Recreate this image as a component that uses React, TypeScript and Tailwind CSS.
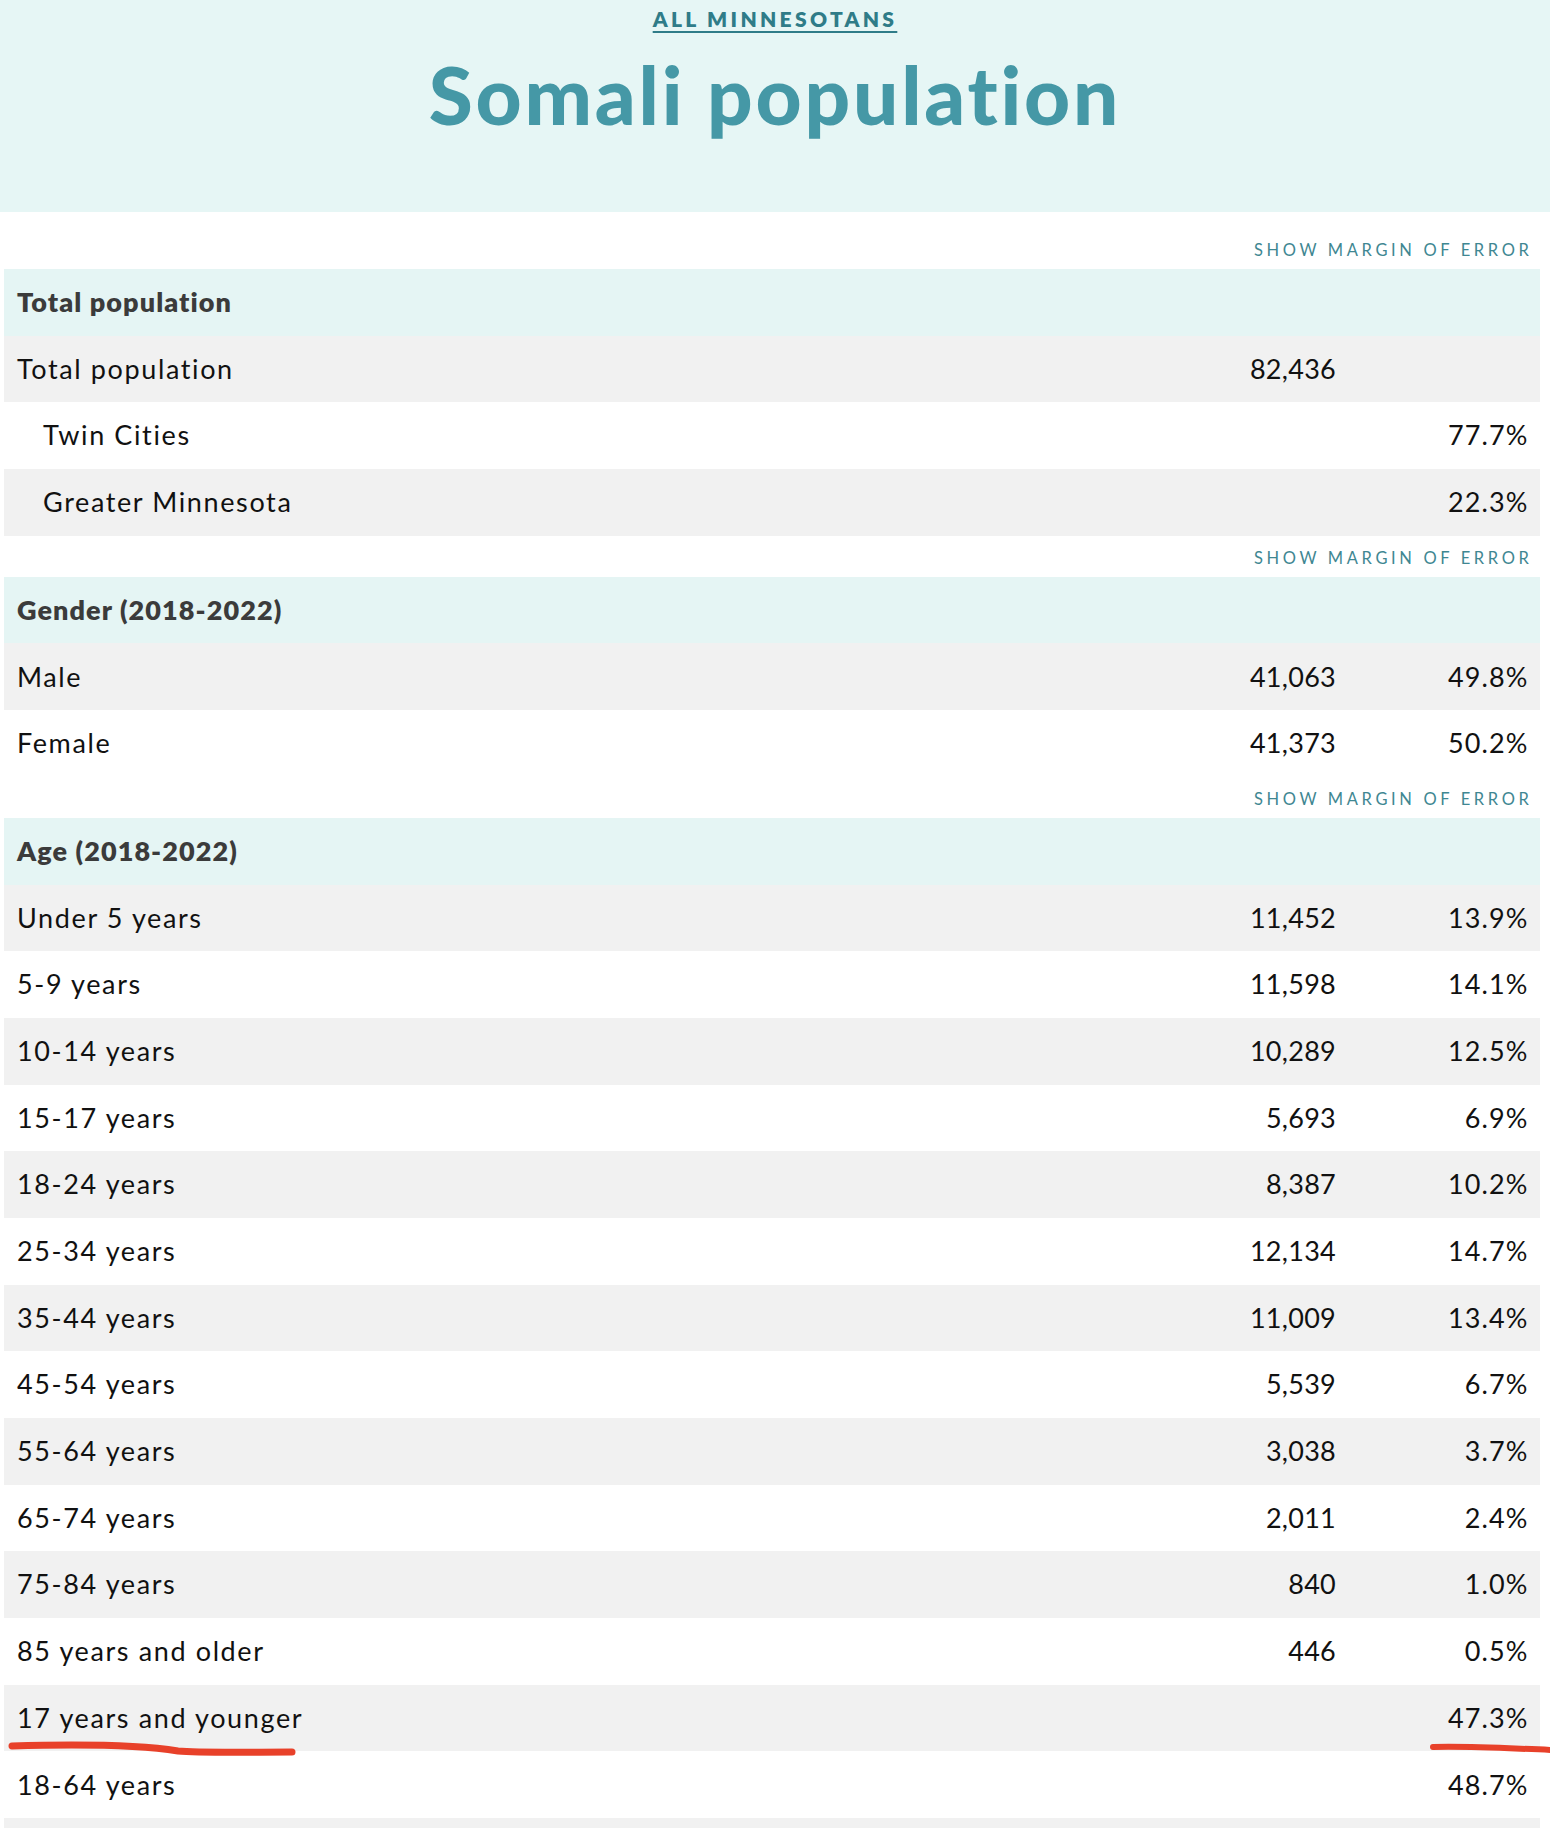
import React from "react";

type Row = { label: string; count?: string; pct?: string; indent?: boolean };
type Section = { title: string; rows: Row[]; first?: boolean };

const sections: Section[] = [
  {
    title: "Total population",
    first: true,
    rows: [
      { label: "Total population", count: "82,436" },
      { label: "Twin Cities", pct: "77.7%", indent: true },
      { label: "Greater Minnesota", pct: "22.3%", indent: true },
    ],
  },
  {
    title: "Gender (2018-2022)",
    rows: [
      { label: "Male", count: "41,063", pct: "49.8%" },
      { label: "Female", count: "41,373", pct: "50.2%" },
    ],
  },
  {
    title: "Age (2018-2022)",
    rows: [
      { label: "Under 5 years", count: "11,452", pct: "13.9%" },
      { label: "5-9 years", count: "11,598", pct: "14.1%" },
      { label: "10-14 years", count: "10,289", pct: "12.5%" },
      { label: "15-17 years", count: "5,693", pct: "6.9%" },
      { label: "18-24 years", count: "8,387", pct: "10.2%" },
      { label: "25-34 years", count: "12,134", pct: "14.7%" },
      { label: "35-44 years", count: "11,009", pct: "13.4%" },
      { label: "45-54 years", count: "5,539", pct: "6.7%" },
      { label: "55-64 years", count: "3,038", pct: "3.7%" },
      { label: "65-74 years", count: "2,011", pct: "2.4%" },
      { label: "75-84 years", count: "840", pct: "1.0%" },
      { label: "85 years and older", count: "446", pct: "0.5%" },
      { label: "17 years and younger", pct: "47.3%" },
      { label: "18-64 years", pct: "48.7%" },
      // next row only peeks in at the bottom edge
      { label: "" },
    ],
  },
];

function MarginToggle({ first }: { first?: boolean }) {
  return (
    <div
      className={
        "flex h-[41px] items-center justify-end pr-[7px] pt-[4px] text-[16.5px] uppercase tracking-[0.22em] text-[#3f8792] " +
        (first ? "mt-[16px]" : "")
      }
    >
      Show margin of error
    </div>
  );
}

function DataTable({ section }: { section: Section }) {
  return (
    <div>
      <MarginToggle first={section.first} />
      <div className="flex h-[66.7px] items-center bg-[#e5f5f4] pl-[13px] text-[27px] font-extrabold tracking-[0.04em] text-[#3b3b3b]">
        {section.title}
      </div>
      {section.rows.map((row, i) => (
        <div
          key={row.label + i}
          className={
            "flex h-[66.7px] items-center pr-[11px] text-[27px] text-[#111] " +
            (i % 2 === 0 ? "bg-[#f1f1f1] " : "bg-white ") +
            (row.indent ? "pl-[39px]" : "pl-[13px]")
          }
        >
          <span className="flex-1 tracking-[0.06em]">{row.label}</span>
          <span className="w-[200px] text-right tracking-[0.01em]">{row.count}</span>
          <span className="w-[192.5px] text-right tracking-[0.04em]">{row.pct}</span>
        </div>
      ))}
    </div>
  );
}

export default function App() {
  return (
    <div className="relative h-[1828px] w-[1550px] overflow-hidden bg-white font-['Lato','Open_Sans',sans-serif]">
      <header className="flex h-[212px] flex-col items-center bg-[#e6f6f5]">
        <a
          href="#"
          className="mt-[8px] text-[21px] font-extrabold uppercase leading-none tracking-[3.3px] text-[#2f7c88] underline decoration-[2px] underline-offset-[4px]"
        >
          All Minnesotans
        </a>
        <h1 className="mt-[25px] text-[80px] font-black leading-none tracking-[0.035em] text-[#4598a6]">
          Somali population
        </h1>
      </header>

      <div className="pl-[4px] pr-[10.5px]">
        {sections.map((s) => (
          <DataTable key={s.title} section={s} />
        ))}
      </div>

      <svg
        className="pointer-events-none absolute left-0 top-0"
        width="1550"
        height="1828"
        viewBox="0 0 1550 1828"
      >
        <path
          d="M12 1746 C 80 1744, 140 1745, 178 1751 C 200 1753, 250 1752, 292 1752"
          fill="none"
          stroke="#e8412a"
          strokeWidth="7"
          strokeLinecap="round"
        />
        <path
          d="M1433 1747 C 1470 1746, 1500 1748, 1552 1750"
          fill="none"
          stroke="#e8412a"
          strokeWidth="6"
          strokeLinecap="round"
        />
      </svg>
    </div>
  );
}
